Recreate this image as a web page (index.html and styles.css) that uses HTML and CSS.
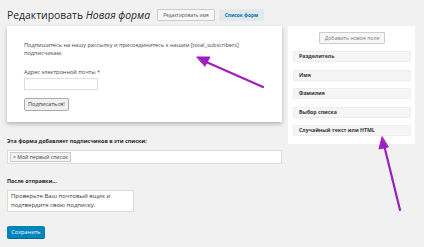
FILE: index.html
```html
<!DOCTYPE html>
<html>

<head>
    <meta charset="utf-8">
    <title>Редактировать форму</title>
    <link rel="stylesheet" href="styles.css">
</head>

<body>
    <div class="head">
        <h1>Редактировать <em>Новая форма</em></h1>
        <a class="btn">Редактировать имя</a>
        <a class="btn cur">Список форм</a>
    </div>
    <div class="wrap">
        <div class="main">
            <div class="card">
                <p class="intro">Подпишитесь на нашу рассылку и присоединитесь к нашим [total_subscribers] подписчикам.</p>
                <p class="lbl">Адрес электронной почты *</p>
                <div class="field"></div>
                <div class="sub">Подписаться!</div>
            </div>
            <p class="h">Эта форма добавляет подписчиков в эти списки:</p>
            <div class="tags"><span class="tag">× Мой первый список</span></div>
            <p class="h after">После отправки...</p>
            <div class="area">Проверьте Ваш почтовый ящик и подтвердите свою подписку.</div>
            <div class="save">Сохранить</div>
        </div>
        <div class="side">
            <div class="add"><span class="btn">Добавить новое поле</span></div>
            <div class="item">Разделитель</div>
            <div class="item">Имя</div>
            <div class="item">Фамилия</div>
            <div class="item">Выбор списка</div>
            <div class="item">Случайный текст или HTML</div>
        </div>
    </div>
    <svg class="arrows" width="424" height="247" viewBox="0 0 424 247">
        <g stroke="#9d1fbd" stroke-width="2.2" stroke-linecap="round" fill="#9d1fbd">
            <line x1="263" y1="87" x2="204" y2="61" />
            <polygon points="197,57 210,57 205,66" stroke-width="1" />
            <line x1="400" y1="210" x2="384" y2="145" />
            <polygon points="382,137 379,149 388,147" stroke-width="1" />
        </g>
    </svg>
</body>

</html>
```

FILE: styles.css
```css
body {
    margin: 0;
    padding: 8px 7px;
    background: #f1f1f1;
    font-family: "Open Sans", sans-serif;
    color: #444;
    font-size: 6px;
}

p {
    margin: 0;
}

.head {
    display: flex;
    align-items: center;
    height: 14px;
}

h1 {
    margin: 0;
    font-size: 10.4px;
    font-weight: 400;
    color: #23282d;
}

.btn {
    display: inline-block;
    margin-left: 6px;
    padding: 0 5px;
    line-height: 10px;
    font-size: 4.8px;
    color: #555;
    background: #f7f7f7;
    border: 1px solid #ccc;
    border-radius: 1px;
}

.head .btn:first-of-type {
    margin-left: 7px;
}

.btn.cur {
    margin-left: 4px;
    background: #e2e8ec;
    border-color: #e2e8ec;
    color: #0073aa;
    font-weight: 700;
}

.wrap {
    display: flex;
    align-items: flex-start;
    margin-top: 4px;
}

.main {
    width: 275px;
}

.card {
    height: 96px;
    box-sizing: border-box;
    padding: 15px 17px 0;
    background: #fff;
    box-shadow: 0 2px 4px rgba(0, 0, 0, .25);
}

.intro {
    line-height: 8px;
    font-size: 5.6px;
    width: 225px;
}

.lbl {
    margin-top: 11px;
    font-size: 5.6px;
    line-height: 8px;
}

.field {
    width: 72px;
    height: 10px;
    margin-top: 2px;
    border: 1px solid #ddd;
}

.sub {
    display: inline-block;
    margin-top: 8px;
    padding: 0 3px;
    line-height: 11px;
    font-size: 5.6px;
    color: #333;
    background: #f0f0f0;
    border: 1px solid #aaa;
    border-radius: 2px;
}

.h {
    margin-top: 15px;
    font-size: 5.4px;
    font-weight: 700;
    color: #23282d;
}

.tags {
    margin-top: 5px;
    height: 10px;
    padding: 1px 2px;
    background: #fff;
    border: 1px solid #ddd;
}

.tag {
    display: inline-block;
    padding: 0 2px;
    line-height: 8px;
    font-size: 5.2px;
    background: #f3f3f3;
    border: 1px solid #ccc;
}

.h.after {
    margin-top: 13px;
}

.area {
    width: 119px;
    height: 18px;
    margin-top: 5px;
    padding: 1px 3px;
    line-height: 8.5px;
    font-size: 6px;
    color: #333;
    background: #fff;
    border: 1px solid #ddd;
}

.save {
    display: inline-block;
    margin-top: 14px;
    width: 38px;
    line-height: 12px;
    text-align: center;
    font-size: 5.6px;
    color: #fff;
    background: #0085ba;
    border-radius: 2px;
    box-shadow: 0 1px 0 #006799;
}

.side {
    width: 127px;
    margin-left: 6px;
    padding: 6px 4px 8px 5px;
    box-sizing: border-box;
    background: #fff;
}

.add {
    text-align: center;
    margin-bottom: 7px;
}

.add .btn {
    margin: 0;
    color: #777;
    font-size: 5.2px;
}

.item {
    margin-top: 7.5px;
    padding: 0 5px;
    line-height: 9px;
    font-size: 5.2px;
    font-weight: 700;
    color: #333;
    background: #f5f5f5;
    border: 1px solid #eee;
    border-radius: 1px;
}

.add + .item {
    margin-top: 0;
}

.arrows {
    position: absolute;
    left: 0;
    top: 0;
    pointer-events: none;
}
```
